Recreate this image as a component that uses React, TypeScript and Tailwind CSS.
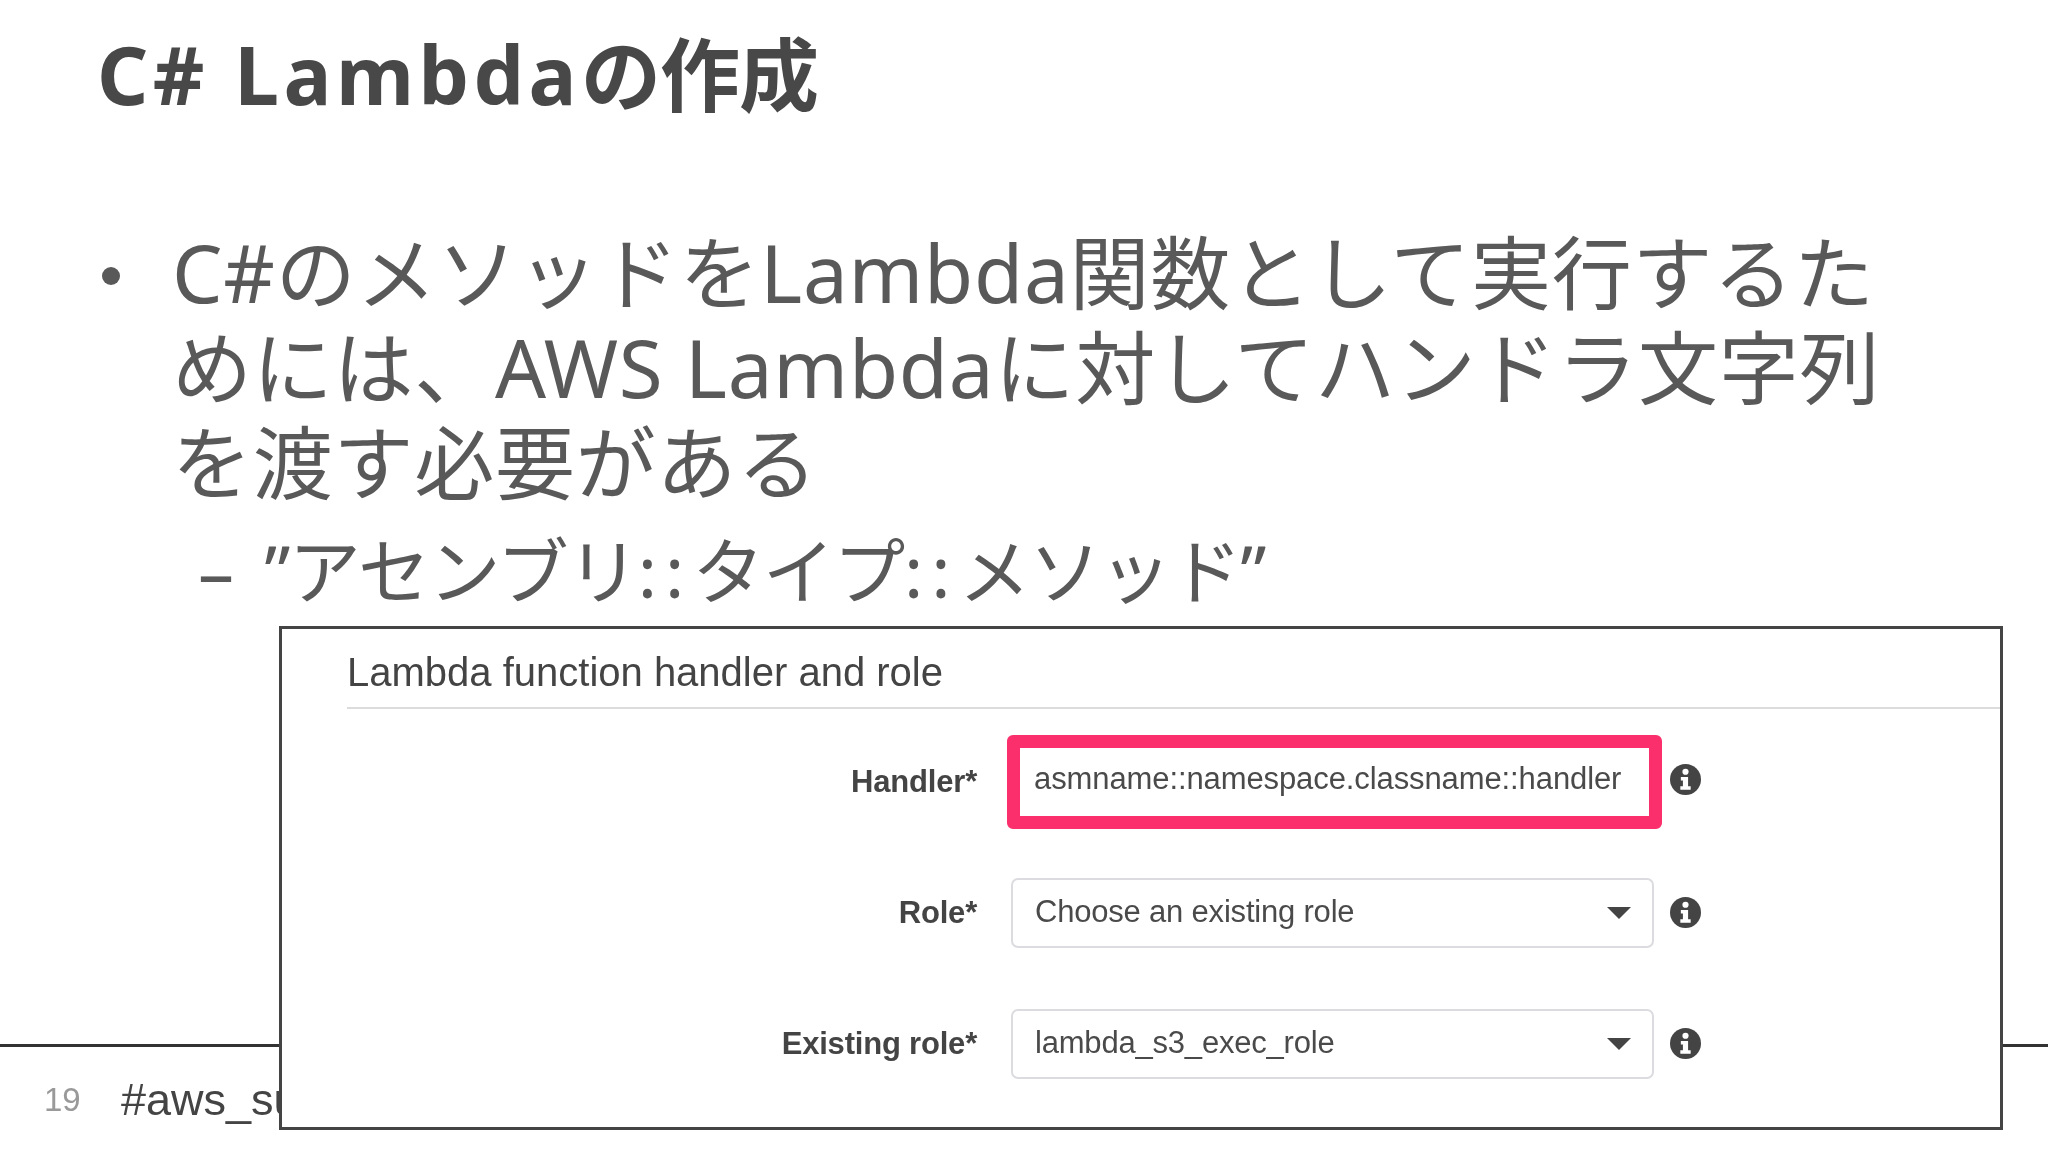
const jp = "font-['Noto_Sans','Noto_Sans_CJK_JP',sans-serif]"
const aws = "font-['Liberation_Sans',sans-serif]"

const InfoIcon = ({ className = "" }: { className?: string }) => (
    <svg viewBox="0 0 30 30" className={`h-[31px] w-[31px] shrink-0 ${className}`}>
        <circle cx="15" cy="15" r="15" fill="#444444" />
        <circle cx="15" cy="7.5" r="3" fill="#ffffff" />
        <path d="M10.5 12.5h7v9h2.5v3.5h-10v-3.5h2.5v-5.5h-2z" fill="#ffffff" />
    </svg>
)

const Caret = () => (
    <svg viewBox="0 0 24 12" className="h-[12px] w-[24px]">
        <path d="M0 0h24l-12 12z" fill="#444444" />
    </svg>
)

const Select = ({ value }: { value: string }) => (
    <div className="ml-[4px] flex h-[70px] w-[643px] items-center justify-between rounded-[7px] border-2 border-[#dcdce0] pl-[22px] pr-[21px]">
        <span className="text-[31px] tracking-[-0.2px] text-[#4a4a4a]">{value}</span>
        <Caret />
    </div>
)

const Row = ({ label, children }: { label: string, children: React.ReactNode }) => (
    <div className="flex h-[131px] items-center">
        <div className="w-[695px] shrink-0 pt-[2px] text-right text-[31px] font-bold tracking-[-0.2px] text-[#444444]">{label}</div>
        <div className="ml-[30px] flex items-center">{children}</div>
    </div>
)

const App = () => {
    return (
        <div className={`relative flex h-[1152px] w-[2048px] flex-col overflow-hidden bg-white blur-[0.4px] ${jp}`}>
            <h1 className="pl-[97px] pt-[24px] text-[80px] font-bold leading-[100px] text-[#484848]">
                <span className="tracking-[4.5px]">C# Lambda</span>
                <span className="tracking-[-1px]">の作成</span>
            </h1>

            <div className="mt-[100px] flex pl-[102px] text-[#595959]">
                <span className="mr-[52px] mt-[43px] h-[18px] w-[18px] shrink-0 rounded-full bg-[#595959]" />
                <div className="text-[80px] leading-[95px] tracking-[0.75px]">
                    <div className="whitespace-nowrap">C#のメソッドをLambda関数として実行するた</div>
                    <div className="whitespace-nowrap">めには、AWS Lambdaに対してハンドラ文字列</div>
                    <div className="whitespace-nowrap">を渡す必要がある</div>
                </div>
            </div>

            <div className="mt-[16px] flex whitespace-nowrap pl-[198px] text-[72px] leading-[90px] tracking-[-1.5px] text-[#595959]">
                <span className="mr-[32px]">–</span>
                <span>”アセンブリ<span className="tracking-[8px]">::</span>タイプ<span className="tracking-[8px]">::</span>メソッド”</span>
            </div>

            <div className="mt-auto h-[108px] border-t-[3px] border-[#333333]">
                <div className={`flex items-center pl-[44px] pt-[19px] ${aws}`}>
                    <span className="w-[77px] text-[33px] text-[#999999]">19</span>
                    <span className="text-[45px] text-[#444444]">#aws_summit</span>
                </div>
            </div>

            <div className={`absolute left-[279px] top-[626px] h-[504px] w-[1724px] border-[3px] border-[#444444] bg-white ${aws}`}>
                <div className="ml-[65px] flex h-[80px] items-center border-b-2 border-[#dcdcdc] pt-[7px]">
                    <span className="text-[40px] text-[#444444]">Lambda function handler and role</span>
                </div>
                <div className="mt-[7px]">
                    <Row label="Handler*">
                        <div className="flex h-[94px] w-[655px] items-center rounded-[6px] border-[13px] border-[#fb2f6b] pb-[4px] pl-[14px]">
                            <span className="whitespace-nowrap text-[31px] tracking-[-0.1px] text-[#4a4a4a]">asmname::namespace.classname::handler</span>
                        </div>
                        <InfoIcon className="mb-[4px] ml-[8px]" />
                    </Row>
                    <Row label="Role*">
                        <Select value="Choose an existing role" />
                        <InfoIcon className="ml-[16px]" />
                    </Row>
                    <Row label="Existing role*">
                        <Select value="lambda_s3_exec_role" />
                        <InfoIcon className="ml-[16px]" />
                    </Row>
                </div>
            </div>
        </div>
    )
}

export default App
